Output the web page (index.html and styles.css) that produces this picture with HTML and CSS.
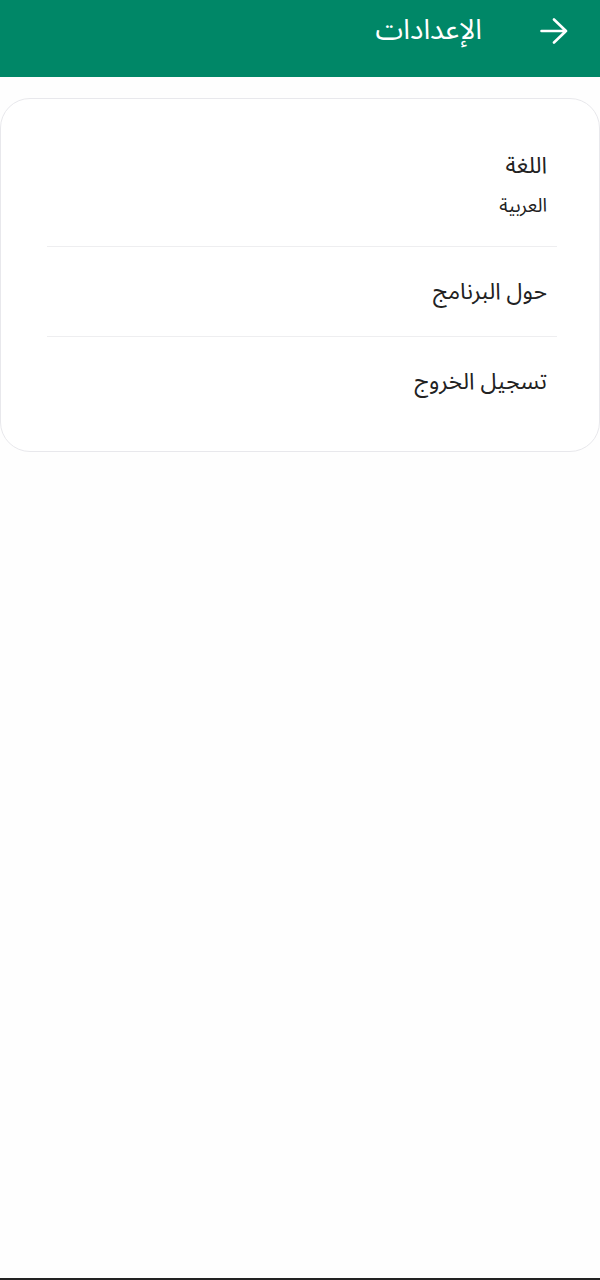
FILE: index.html
```html
<!DOCTYPE html>
<html lang="ar" dir="rtl">
<head>
  <meta charset="UTF-8" />
  <title>الإعدادات</title>
  <link rel="stylesheet" href="styles.css">
</head>
<body>

  <header class="topbar">
    <button class="back" aria-label="رجوع">
      <svg width="28" height="26" viewBox="0 0 28 26"><path d="M1.5 13H26M14 1.5L26 13L14 24.5" fill="none" stroke="#fff" stroke-width="2.6" stroke-linecap="round" stroke-linejoin="round"/></svg>
    </button>
    <h1>الإعدادات</h1>
  </header>

  <main class="card">
    <div class="item">
      <div class="title">اللغة</div>
      <div class="sub">العربية</div>
    </div>
    <div class="item">
      <div class="title">حول البرنامج</div>
    </div>
    <div class="item">
      <div class="title">تسجيل الخروج</div>
    </div>
  </main>

  <div class="navline"></div>

</body>
</html>
```

FILE: styles.css
```css
html, body {
  height: 100%;
}

body {
  margin: 0;
  font-family: "Noto Sans Arabic", "Noto Naskh Arabic", "DejaVu Sans", sans-serif;
  background-color: #fefefe;
  color: #222;
  display: flex;
  flex-direction: column;
}

.topbar {
  height: 77px;
  box-sizing: border-box;
  background-color: #008767;
  display: flex;
  align-items: flex-start;
  padding: 12px 32px 0 0;
  gap: 58px;
  color: #fff;
}

.topbar h1 {
  margin: 0;
  font-size: 28px;
  line-height: 38px;
  font-weight: normal;
}

.back {
  background: none;
  border: none;
  padding: 0;
  margin-top: 6px;
  display: flex;
}

.card {
  margin-top: 21px;
  border: 1px solid #e8e8ec;
  border-radius: 30px;
  background-color: #fff;
  padding: 24px 42px 25px 46px;
}

.item {
  padding: 29px 10px 28px 0;
  border-bottom: 1px solid #eeeef0;
}

.item:first-child {
  padding-top: 27px;
  padding-bottom: 25px;
}

.item:last-child {
  border-bottom: none;
}

.title {
  font-size: 23px;
  line-height: 32px;
}

.sub {
  font-size: 19px;
  line-height: 30px;
  margin-top: 9px;
}

.navline {
  margin-top: auto;
  height: 2px;
  background-color: #222;
}
```
